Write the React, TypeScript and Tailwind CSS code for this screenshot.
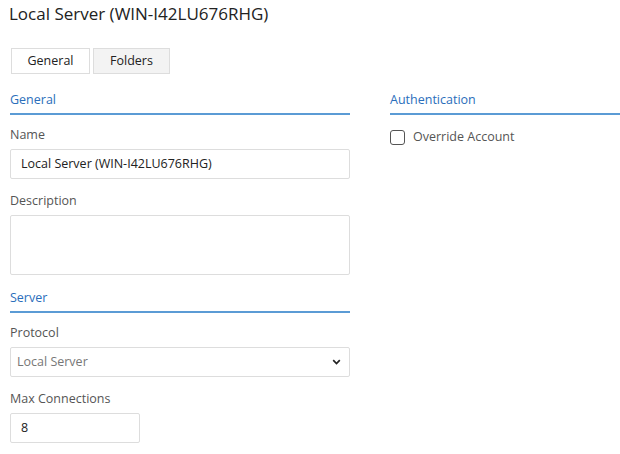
import React from "react";

const font = { fontFamily: '"Segoe UI", "Open Sans", "Noto Sans", sans-serif' };

function Section({ title }: { title: string }) {
  return (
    <div className="border-b-2 border-[#5b9bd5] pb-[4px] text-[12.5px] leading-[18px] text-[#2a6ebb]">
      {title}
    </div>
  );
}

function Label({ children }: { children: React.ReactNode }) {
  return <div className="text-[12.5px] leading-[18px] text-[#555]">{children}</div>;
}

export default function App() {
  return (
    <div className="w-[620px] h-[454px] bg-white overflow-hidden" style={font}>
      <div className="pl-[9px] pt-[2px] text-[17px] leading-[24px] text-[#222]">
        Local Server (WIN-I42LU676RHG)
      </div>
      <div className="flex gap-[3px] pl-[11px] mt-[22px]">
        <div className="w-[79px] h-[26px] border border-[#ddd] bg-white flex items-center justify-center text-[12.5px] text-[#222]">
          General
        </div>
        <div className="w-[77px] h-[26px] border border-[#ddd] bg-[#f3f3f3] flex items-center justify-center text-[12.5px] text-[#222]">
          Folders
        </div>
      </div>
      <div className="flex pl-[10px] mt-[17px]">
        <div className="w-[340px] flex flex-col">
          <Section title="General" />
          <div className="mt-[11px]"><Label>Name</Label></div>
          <div className="mt-[5px] h-[30px] border border-[#ddd] rounded-[2px] flex items-center pl-[10px] text-[12.5px] text-[#222]">
            Local Server (WIN-I42LU676RHG)
          </div>
          <div className="mt-[13px]"><Label>Description</Label></div>
          <div className="mt-[5px] h-[60px] border border-[#ddd] rounded-[2px]" />
          <div className="mt-[14px]"><Section title="Server" /></div>
          <div className="mt-[11px]"><Label>Protocol</Label></div>
          <div className="mt-[5px] h-[30px] border border-[#ddd] rounded-[2px] flex items-center justify-between pl-[6px] pr-[8px] text-[12.5px] text-[#777]">
            <span>Local Server</span>
            <svg width="9" height="6" viewBox="0 0 9 6">
              <path d="M1.2 1.2 L4.5 4.5 L7.8 1.2" fill="none" stroke="#222" strokeWidth="1.7" />
            </svg>
          </div>
          <div className="mt-[13px]"><Label>Max Connections</Label></div>
          <div className="mt-[5px] w-[130px] h-[30px] border border-[#ddd] rounded-[2px] flex items-center pl-[10px] text-[12.5px] text-[#222]">
            8
          </div>
        </div>
        <div className="ml-[40px] flex-1 flex flex-col">
          <Section title="Authentication" />
          <div className="mt-[13px] flex items-center gap-[8px]">
            <div className="w-[15px] h-[15px] border-[1.5px] border-[#555] rounded-[3px]" />
            <span className="text-[12.5px] text-[#555]">Override Account</span>
          </div>
        </div>
      </div>
    </div>
  );
}
